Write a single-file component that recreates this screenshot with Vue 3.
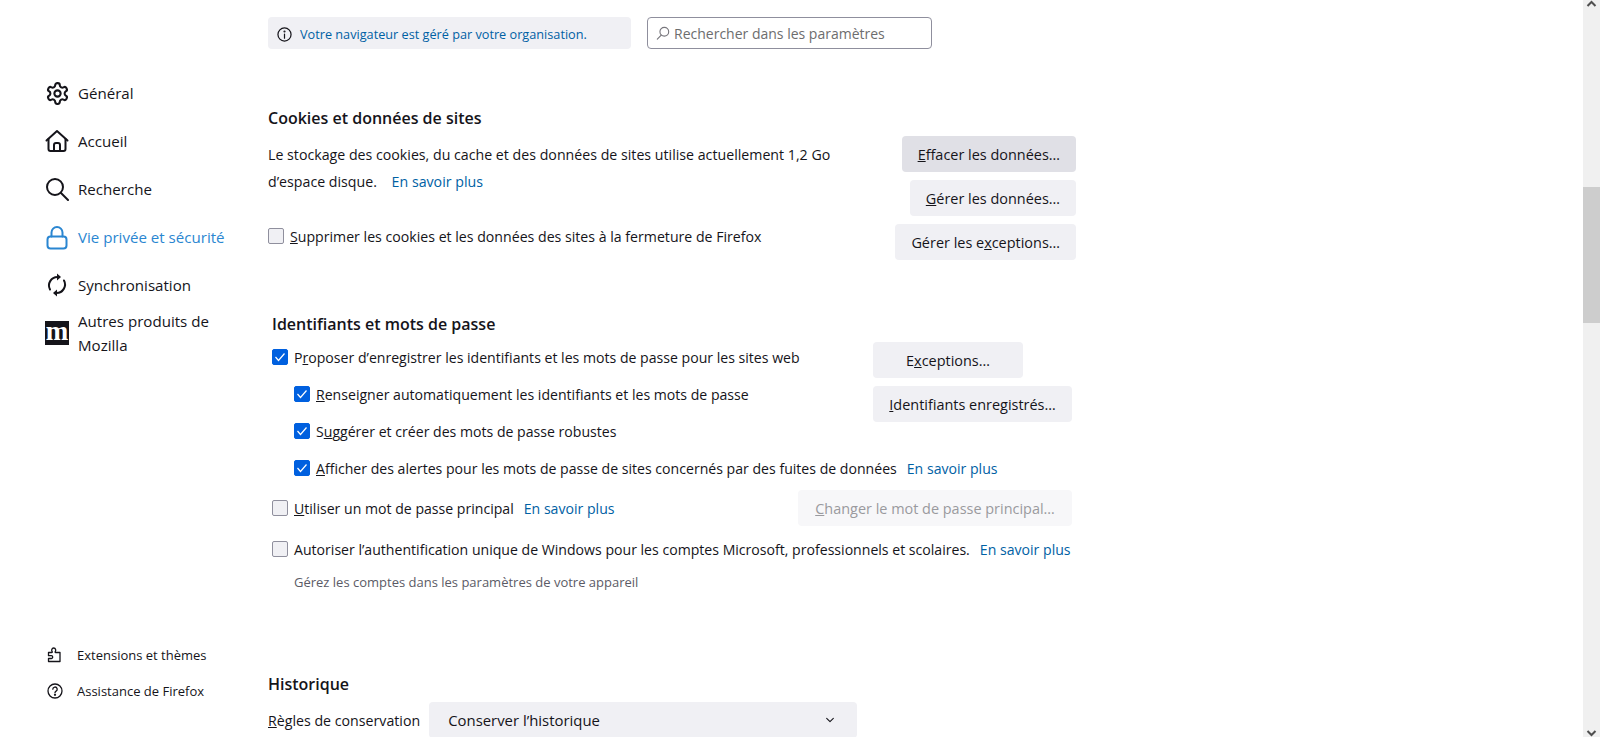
<template>
  <div class="page">
    <aside class="sidebar">
      <nav class="nav">
        <a v-for="item in navItems" :key="item.label" class="nav-item" :class="{ active: item.active, tall: item.tall }">
          <span class="nav-icon">
            <svg v-if="item.icon === 'gear'" viewBox="0 0 24 24" width="25" height="25" class="line">
              <path d="M12.22 2h-.44a2 2 0 0 0-2 2v.18a2 2 0 0 1-1 1.73l-.43.25a2 2 0 0 1-2 0l-.15-.08a2 2 0 0 0-2.73.73l-.22.38a2 2 0 0 0 .73 2.73l.15.1a2 2 0 0 1 1 1.72v.51a2 2 0 0 1-1 1.74l-.15.09a2 2 0 0 0-.73 2.73l.22.38a2 2 0 0 0 2.73.73l.15-.08a2 2 0 0 1 2 0l.43.25a2 2 0 0 1 1 1.73V20a2 2 0 0 0 2 2h.44a2 2 0 0 0 2-2v-.18a2 2 0 0 1 1-1.73l.43-.25a2 2 0 0 1 2 0l.15.08a2 2 0 0 0 2.73-.73l.22-.39a2 2 0 0 0-.73-2.73l-.15-.08a2 2 0 0 1-1-1.74v-.5a2 2 0 0 1 1-1.74l.15-.09a2 2 0 0 0 .73-2.73l-.22-.38a2 2 0 0 0-2.73-.73l-.15.08a2 2 0 0 1-2 0l-.43-.25a2 2 0 0 1-1-1.73V4a2 2 0 0 0-2-2z" />
              <circle cx="12" cy="12" r="3" />
            </svg>
            <svg v-else-if="item.icon === 'home'" viewBox="0 0 24 24" width="24" height="24" class="line">
              <path d="M1.500 11.500 12 2l10.500 9.500" />
              <path d="M3.500 10v10a2 2 0 0 0 2 2h13a2 2 0 0 0 2-2V10" />
              <path d="M9 22v-6a2 2 0 0 1 2-2h2a2 2 0 0 1 2 2v6" />
            </svg>
            <svg v-else-if="item.icon === 'search'" viewBox="0 0 24 24" width="24" height="24" class="line">
              <circle cx="10" cy="10" r="8" />
              <path d="m16 16 7 7" />
            </svg>
            <svg v-else-if="item.icon === 'lock'" viewBox="0 0 24 24" width="24" height="25" class="line blue">
              <path d="M6.500 11V7a5.500 5.500 0 0 1 11 0v4" />
              <rect x="2.500" y="11" width="19" height="12" rx="3" />
            </svg>
            <svg v-else-if="item.icon === 'sync'" viewBox="0 0 24 24" width="24" height="24" class="line">
              <path d="M5 16.500A8.500 8.500 0 0 1 12.500 4" />
              <path d="M19 7.500A8.500 8.500 0 0 1 11.500 20" />
              <path d="M12 .5v7L16 4z" class="solid" />
              <path d="M12 16.500v7L8 20z" class="solid" />
            </svg>
            <span v-else class="moz">m</span>
          </span>
          <span class="nav-label">{{ item.label }}</span>
        </a>
      </nav>
      <div class="foot">
        <a class="foot-item">
          <svg viewBox="0 0 16 16" width="16" height="16" class="line thin">
            <path d="M1.500 5.500h3.200c.6 0 .8-.6.400-1C4.400 3.800 4.500 1 6.700 1s2.300 2.800 1.600 3.500c-.4.400-.2 1 .4 1h4.300v9H1.500v-3h2.800a1.300 1.300 0 0 0 0-2.800H1.500z" />
          </svg>
          <span>Extensions et thèmes</span>
        </a>
        <a class="foot-item">
          <svg viewBox="0 0 16 16" width="16" height="16" class="line thin">
            <circle cx="8" cy="8" r="7" />
            <path d="M5.800 6.200a2.200 2.200 0 1 1 3.300 1.900c-.7.400-1.100.8-1.100 1.700" />
            <circle cx="8" cy="11.800" r=".5" />
          </svg>
          <span>Assistance de Firefox</span>
        </a>
      </div>
    </aside>

    <main class="content">
      <div class="topbar">
        <div class="policy">
          <svg viewBox="0 0 16 16" width="15" height="15" class="line thin">
            <circle cx="8" cy="8" r="7" />
            <path d="M8 7.500V12" />
            <circle cx="8" cy="4.800" r=".5" />
          </svg>
          <a>Votre navigateur est géré par votre organisation.</a>
        </div>
        <div class="search">
          <svg viewBox="0 0 16 16" width="14" height="14" class="line thin grey">
            <circle cx="9.500" cy="6.500" r="5" />
            <path d="M6 10.500 1.500 15" />
          </svg>
          <span>Rechercher dans les paramètres</span>
        </div>
      </div>

      <section class="cookies">
        <h2>Cookies et données de sites</h2>
        <div class="split">
          <div class="left">
            <p class="storage">
              Le stockage des cookies, du cache et des données de sites utilise actuellement 1,2 Go<br />
              d’espace disque. <a class="link gap">En savoir plus</a>
            </p>
            <label class="check-row delete-row">
              <span class="box"></span>
              <span><u>S</u>upprimer les cookies et les données des sites à la fermeture de Firefox</span>
            </label>
          </div>
          <div class="buttons">
            <button class="btn hover"><u>E</u>ffacer les données…</button>
            <button class="btn"><u>G</u>érer les données…</button>
            <button class="btn">Gérer les e<u>x</u>ceptions…</button>
          </div>
        </div>
      </section>

      <section class="logins">
        <h2>Identifiants et mots de passe</h2>
        <div class="split">
          <div class="left">
            <label class="check-row first">
              <span class="box on"><svg viewBox="0 0 16 16" width="16" height="16"><path d="m3.500 8 3 3.500 6-7" /></svg></span>
              <span>P<u>r</u>oposer d’enregistrer les identifiants et les mots de passe pour les sites web</span>
            </label>
            <label class="check-row sub">
              <span class="box on"><svg viewBox="0 0 16 16" width="16" height="16"><path d="m3.500 8 3 3.500 6-7" /></svg></span>
              <span><u>R</u>enseigner automatiquement les identifiants et les mots de passe</span>
            </label>
            <label class="check-row sub">
              <span class="box on"><svg viewBox="0 0 16 16" width="16" height="16"><path d="m3.500 8 3 3.500 6-7" /></svg></span>
              <span>S<u>u</u>ggérer et créer des mots de passe robustes</span>
            </label>
          </div>
          <div class="buttons login-btns">
            <button class="btn wide-a">E<u>x</u>ceptions…</button>
            <button class="btn wide-b"><u>I</u>dentifiants enregistrés…</button>
          </div>
        </div>
        <label class="check-row sub">
          <span class="box on"><svg viewBox="0 0 16 16" width="16" height="16"><path d="m3.500 8 3 3.500 6-7" /></svg></span>
          <span><u>A</u>fficher des alertes pour les mots de passe de sites concernés par des fuites de données</span>
          <a class="link">En savoir plus</a>
        </label>
        <div class="primary-row">
          <label class="check-row">
            <span class="box"></span>
            <span><u>U</u>tiliser un mot de passe principal</span>
            <a class="link">En savoir plus</a>
          </label>
          <button class="btn disabled"><u>C</u>hanger le mot de passe principal…</button>
        </div>
        <label class="check-row sso">
          <span class="box"></span>
          <span>Autoriser l’authentification unique de Windows pour les comptes Microsoft, professionnels et scolaires.</span>
          <a class="link">En savoir plus</a>
        </label>
        <p class="hint">Gérez les comptes dans les paramètres de votre appareil</p>
      </section>

      <section class="history">
        <h2>Historique</h2>
        <div class="select-row">
          <span><u>R</u>ègles de conservation</span>
          <div class="select">
            <span>Conserver l’historique</span>
            <svg viewBox="0 0 12 12" width="10" height="10" class="line thin"><path d="m2 4 4 4 4-4" /></svg>
          </div>
        </div>
      </section>
    </main>

    <div class="scrollbar">
      <svg viewBox="0 0 17 8" width="17" height="8"><path d="M4.500 6 8.500 2l4 4" /></svg>
      <div class="track"><div class="thumb"></div></div>
      <svg viewBox="0 0 17 8" width="17" height="8"><path d="M4.500 2l4 4 4-4" /></svg>
    </div>
  </div>
</template>

<script setup>
const navItems = [
  { label: "Général", icon: "gear" },
  { label: "Accueil", icon: "home" },
  { label: "Recherche", icon: "search" },
  { label: "Vie privée et sécurité", icon: "lock", active: true },
  { label: "Synchronisation", icon: "sync" },
  { label: "Autres produits de Mozilla", icon: "moz", tall: true },
];
</script>

<style>
html,
body {
  margin: 0;
  overflow: hidden;
}
</style>

<style scoped>
.page {
  display: flex;
  width: 1600px;
  height: 737px;
  overflow: hidden;
  background: #fff;
  color: #15141a;
  font-family: "Open Sans", "Noto Sans", sans-serif;
  font-size: 14.2px;
}

.sidebar {
  width: 268px;
  flex: none;
  display: flex;
  flex-direction: column;
  justify-content: space-between;
  padding: 81px 0 36px 45px;
  box-sizing: border-box;
}
.nav {
  display: flex;
  flex-direction: column;
  gap: 24px;
}
.nav-item {
  display: flex;
  align-items: center;
  gap: 9px;
  width: 185px;
  min-height: 24px;
  font-size: 15.1px;
  line-height: 24px;
}
.nav-item.tall {
  margin-top: -12px;
}
.nav-item.active {
  color: #2a86d1;
}
.nav-icon {
  width: 24px;
  height: 24px;
  flex: none;
  display: flex;
  align-items: center;
  justify-content: center;
}
.line {
  fill: none;
  stroke: #15141a;
  stroke-width: 2;
  stroke-linecap: round;
  stroke-linejoin: round;
  flex: none;
}
.line .solid {
  fill: #15141a;
  stroke: none;
}
.line.blue {
  stroke: #2a86d1;
}
.line.thin {
  stroke-width: 1.3;
}
.line.grey {
  stroke: #77767c;
}
.moz {
  width: 24px;
  height: 24px;
  background: #15141a;
  color: #fff;
  font-family: "Liberation Serif", serif;
  font-weight: 700;
  font-size: 27px;
  line-height: 20px;
  text-align: center;
}
.foot {
  display: flex;
  flex-direction: column;
  gap: 16px;
  font-size: 13px;
}
.foot-item {
  display: flex;
  align-items: center;
  gap: 14px;
  line-height: 20px;
  padding-left: 2px;
}

.content {
  flex: none;
  width: 808px;
}
.topbar {
  display: flex;
  gap: 16px;
  padding-top: 17px;
}
.policy {
  width: 363px;
  height: 32px;
  box-sizing: border-box;
  padding: 2px 0 0 9px;
  display: flex;
  align-items: center;
  gap: 8px;
  background: #f0f0f4;
  border-radius: 4px;
  font-size: 12.7px;
  color: #0061a4;
}
.search {
  width: 285px;
  height: 32px;
  box-sizing: border-box;
  border: 1px solid #8f8f9d;
  border-radius: 4px;
  padding-left: 8px;
  display: flex;
  align-items: center;
  gap: 4px;
  color: #6d6d6e;
  font-size: 14px;
}

h2 {
  font-size: 16px;
  font-weight: 600;
  line-height: 22px;
  margin: 0;
}
.cookies {
  margin-top: 58px;
}
.split {
  display: flex;
  justify-content: space-between;
}
.storage {
  margin: 5px 0 0;
  line-height: 27px;
}
.link {
  color: #0061a4;
  margin-left: 10px;
}
.link.gap {
  margin-left: 11px;
}
.check-row {
  display: flex;
  align-items: center;
  height: 24px;
  white-space: nowrap;
}
.box {
  width: 16px;
  height: 16px;
  box-sizing: border-box;
  flex: none;
  margin-right: 6px;
  border: 1px solid #8f8f9d;
  border-radius: 2px;
  background: #f0f0f4;
  display: flex;
}
.box.on {
  background: #0060df;
  border-color: #0060df;
}
.box svg {
  margin: -1px;
  fill: none;
  stroke: #fff;
  stroke-width: 1.2;
}
.delete-row {
  margin-top: 29px;
  font-size: 14.15px;
}
.buttons {
  width: 200px;
  display: flex;
  flex-direction: column;
  align-items: flex-end;
  gap: 8px;
}
.btn {
  height: 36px;
  padding: 0 16px;
  border: none;
  border-radius: 4px;
  background: #f0f0f4;
  color: #15141a;
  font: inherit;
  font-size: 14.45px;
  white-space: nowrap;
}
.btn.hover {
  background: #e0e0e6;
}
.btn.disabled {
  background: #f7f7f9;
  color: #9a9a9e;
  width: 274px;
}
.cookies .split {
  margin-top: 7px;
}

.logins {
  margin-top: 53px;
  padding-left: 4px;
  font-size: 14.1px;
}
.logins .split {
  margin-top: 7px;
  width: 800px;
}
.logins .first {
  margin-top: 3px;
}
.sub {
  margin-left: 22px;
  margin-top: 13px;
}
.wide-a {
  width: 150px;
  margin-right: 49px;
}
.wide-b {
  width: 199px;
}
.primary-row {
  display: flex;
  align-items: center;
  justify-content: space-between;
  width: 800px;
  margin-top: 10px;
}
.sso {
  margin-top: 11px;
}
.hint {
  margin: 12px 0 0 22px;
  color: #5b5b66;
  font-size: 13px;
  line-height: 18px;
}

.history {
  margin-top: 82px;
}
.select-row {
  display: flex;
  align-items: center;
  gap: 9px;
  margin-top: 7px;
}
.select {
  width: 428px;
  height: 36px;
  box-sizing: border-box;
  padding: 0 22px 0 19px;
  display: flex;
  align-items: center;
  justify-content: space-between;
  background: #f0f0f4;
  border-radius: 4px;
  font-size: 14.9px;
}

.scrollbar {
  margin-left: auto;
  width: 17px;
  flex: none;
  display: flex;
  flex-direction: column;
  background: #f0f0f0;
}
.scrollbar svg {
  fill: none;
  stroke: #505050;
  stroke-width: 2;
  flex: none;
}
.track {
  flex: 1;
  padding-top: 179px;
}
.thumb {
  height: 136px;
  background: #cdcdcd;
}
</style>
